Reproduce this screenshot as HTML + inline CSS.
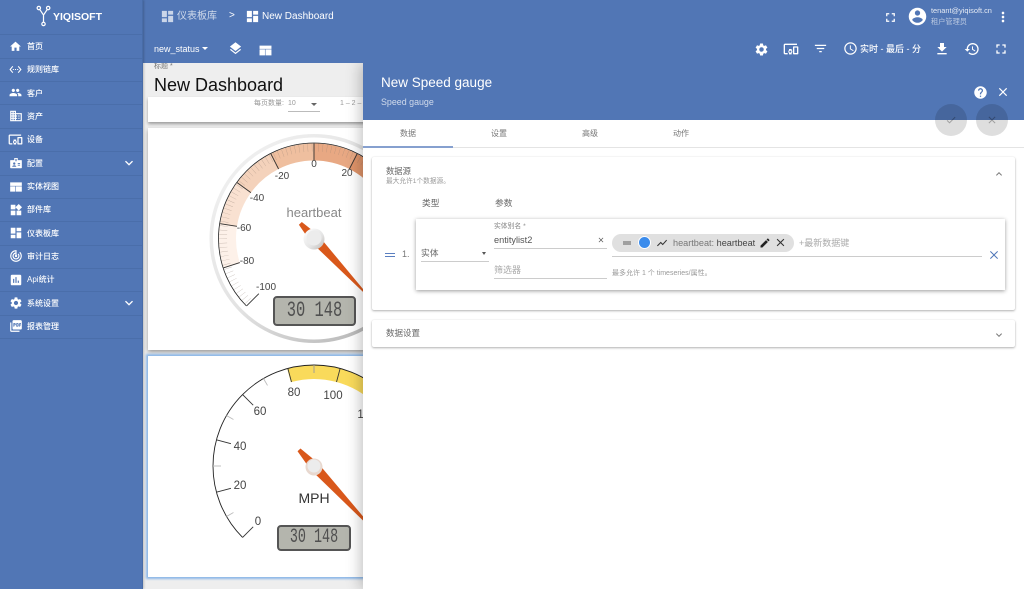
<!DOCTYPE html>
<html><head><meta charset="utf-8"><style>
html,body{margin:0;padding:0;width:1024px;height:589px;overflow:hidden;background:#eee;font-family:"Liberation Sans","Noto Sans CJK SC",sans-serif}
.t{position:absolute;white-space:nowrap;line-height:12px;height:12px}
.i{position:absolute;display:block}
.b{position:absolute}
.m{color:#fff;font-size:8px;left:27px;font-weight:500}
.sep{position:absolute;left:0;width:142px;height:1px;background:#4a6eaa}
.w{fill:#fff}
</style></head><body>
<!-- main content -->
<div class="b" style="left:143px;top:63px;width:220px;height:526px;background:#eee"></div>
<div class="t" style="left:154px;top:61px;font-size:7px;color:#777">标题 *</div>
<div class="t" style="left:154px;top:79px;font-size:18px;color:#111">New Dashboard</div>
<div class="b" style="left:148px;top:97px;width:230px;height:25px;background:#fff;box-shadow:0 2px 3px rgba(0,0,0,.35)"></div>
<div class="t" style="left:254px;top:98px;font-size:7px;color:#999">每页数量:</div>
<div class="t" style="left:288px;top:98px;font-size:7px;color:#999">10</div>
<div class="b" style="left:311px;top:103px;border:3px solid transparent;border-top:3px solid #666;border-bottom:0"></div>
<div class="b" style="left:288px;top:111px;width:32px;height:1px;background:#bbb"></div>
<div class="t" style="left:340px;top:98px;font-size:7px;color:#999">1 – 2 –</div>
<div class="b" style="left:148px;top:128px;width:230px;height:222px;background:#fff;box-shadow:0 2px 4px rgba(0,0,0,.35)"></div>
<div class="b" style="left:148px;top:356px;width:230px;height:221px;background:#fff;box-shadow:0 0 2px 2px #8db8e8"></div>

<svg class="i" style="left:0;top:0" width="1024" height="589" viewBox="0 0 1024 589">
<defs>
<linearGradient id="ring" x1="0" y1="0" x2="1" y2="1"><stop offset="0" stop-color="#f4f4f4"/><stop offset=".5" stop-color="#e2e2e2"/><stop offset="1" stop-color="#a8a8a8"/></linearGradient>
<linearGradient id="hub" x1="0" y1="0" x2="1" y2="1"><stop offset="0" stop-color="#fff"/><stop offset=".6" stop-color="#e4e4e4"/><stop offset="1" stop-color="#bdb8b4"/></linearGradient>
<clipPath id="w"><polygon points="0,0 -200,200 -200,-200 200,-200 200,200"/></clipPath>
</defs>
<!-- gauge 1 -->
<g transform="translate(314 238.500)">
<circle r="104.500" fill="url(#ring)"/>
<circle r="101" fill="#fff"/>
<g clip-path="url(#w)" fill="none">
<circle r="86.500" stroke="#fdf1e9" stroke-width="17" pathLength="360" stroke-dasharray="27 333" transform="rotate(-198)"/>
<circle r="86.500" stroke="#f9e1d1" stroke-width="17" pathLength="360" stroke-dasharray="27 333" transform="rotate(-171)"/>
<circle r="86.500" stroke="#f4d2bb" stroke-width="17" pathLength="360" stroke-dasharray="27 333" transform="rotate(-144)"/>
<circle r="86.500" stroke="#efbf9f" stroke-width="17" pathLength="360" stroke-dasharray="27 333" transform="rotate(-117)"/>
<circle r="86.500" stroke="#e8a883" stroke-width="17" pathLength="360" stroke-dasharray="27 333" transform="rotate(-90)"/>
<circle r="86.500" stroke="#e0946a" stroke-width="17" pathLength="360" stroke-dasharray="27 333" transform="rotate(-63)"/>
<circle r="91" stroke="#8a7a70" stroke-width="8" pathLength="360" stroke-dasharray=".2 2.500" transform="rotate(-90)" opacity=".55"/>
<circle r="95.500" stroke="#222" stroke-width=".8" pathLength="360" stroke-dasharray="270 90" transform="rotate(-225)"/>
</g>
<g stroke="#333" stroke-width=".9">
<line y1="-95" y2="-78" transform="rotate(-135)"/><line y1="-95" y2="-78" transform="rotate(-108)"/><line y1="-95" y2="-78" transform="rotate(-81)"/><line y1="-95" y2="-78" transform="rotate(-54)"/><line y1="-95" y2="-78" transform="rotate(-27)"/><line y1="-95" y2="-78"/><line y1="-95" y2="-78" transform="rotate(27)"/>
</g>
</g>
<g font-family="Liberation Sans" font-size="10" fill="#444" text-anchor="middle">
<text x="314" y="167">0</text><text x="347" y="176">20</text><text x="282" y="179">-20</text><text x="257" y="201">-40</text><text x="244" y="231">-60</text><text x="247" y="264">-80</text><text x="266" y="290">-100</text>
<text x="314" y="217" font-size="13" fill="#888">heartbeat</text>
</g>
<polygon transform="translate(314 238) rotate(47)" points="-20,-2 0,-5 80,-.5 80,.5 0,5 -20,2" fill="#d9581b"/>
<circle cx="314" cy="239" r="10.500" fill="url(#hub)"/><circle cx="314" cy="238" r="7.500" fill="#ececec"/>
<!-- gauge 2 -->
<g transform="translate(314 466)">
<circle r="94" fill="none" stroke="#f9da5b" stroke-width="14" pathLength="360" stroke-dasharray="60 300" transform="rotate(-105)"/>
<circle r="101" fill="none" stroke="#222" stroke-width=".9" clip-path="url(#w)"/>
<g stroke="#333" stroke-width=".9">
<line y1="-101" y2="-86" transform="rotate(-135)"/><line y1="-101" y2="-86" transform="rotate(-105)"/><line y1="-101" y2="-86" transform="rotate(-75)"/><line y1="-101" y2="-86" transform="rotate(-45)"/><line y1="-101" y2="-87" transform="rotate(-15)"/><line y1="-101" y2="-87" transform="rotate(15)"/>
</g>
<g stroke="#bbb" stroke-width=".9">
<line y1="-101" y2="-93" transform="rotate(-120)"/><line y1="-101" y2="-93" transform="rotate(-90)"/><line y1="-101" y2="-93" transform="rotate(-60)"/><line y1="-101" y2="-93" transform="rotate(-30)"/><line y1="-101" y2="-93" stroke="#999"/>
</g>
</g>
<g font-family="Liberation Sans" font-size="11.500" fill="#444" text-anchor="middle">
<text x="258" y="525">0</text><text x="240" y="489">20</text><text x="240" y="450">40</text><text x="260" y="415">60</text><text x="294" y="396">80</text><text x="333" y="399">100</text><text x="367" y="418">120</text>
<text x="314" y="503" font-size="14" fill="#333">MPH</text>
</g>
<polygon transform="translate(314 466) rotate(47)" points="-22,-2 0,-5 90,-.5 90,.5 0,5 -22,2" fill="#d9581b"/>
<circle cx="314" cy="467" r="8.500" fill="#e8d8cf"/><circle cx="314" cy="466" r="6.500" fill="#ececec"/>
</svg>
<!-- LCDs -->
<div class="b" style="left:273px;top:296px;width:79px;height:26px;border:2px solid #555;border-radius:4px;background:#b4b5ad"></div>
<div class="t" style="left:273px;top:296px;width:83px;height:30px;line-height:30px;text-align:center;font-family:'Liberation Mono',monospace;font-size:22px;color:#505050;transform:scaleX(.7)">30 148</div>
<div class="b" style="left:277px;top:525px;width:70px;height:22px;border:2px solid #555;border-radius:4px;background:#b4b5ad"></div>
<div class="t" style="left:277px;top:525px;width:74px;height:26px;line-height:26px;text-align:center;font-family:'Liberation Mono',monospace;font-size:20px;color:#505050;transform:scaleX(.67)">30 148</div>

<!-- top bar + sidebar -->
<div class="b" style="left:0;top:0;width:1024px;height:63px;background:#5176b5"></div>
<div class="b" style="left:0;top:0;width:142px;height:589px;background:#5176b5;border-right:1px solid #486ca8;box-shadow:1px 0 2px rgba(0,0,0,.2)"></div>
<div class="sep" style="top:34px"></div><div class="sep" style="top:58px"></div><div class="sep" style="top:81px"></div><div class="sep" style="top:104px"></div><div class="sep" style="top:128px"></div><div class="sep" style="top:151px"></div><div class="sep" style="top:175px"></div><div class="sep" style="top:198px"></div><div class="sep" style="top:221px"></div><div class="sep" style="top:245px"></div><div class="sep" style="top:268px"></div><div class="sep" style="top:291px"></div><div class="sep" style="top:315px"></div><div class="sep" style="top:338px"></div>

<svg class="i" style="left:36px;top:4px" width="15" height="24" viewBox="0 0 16 24" fill="none" stroke="#fff" stroke-width="1.300"><circle cx="3" cy="3.500" r="1.800"/><circle cx="13" cy="3.500" r="1.800"/><circle cx="8" cy="20.500" r="1.800"/><path d="M4 5L8 11L12 5M8 11V18.500"/></svg>
<div class="t" style="left:53px;top:11px;font-size:10.500px;font-weight:bold;color:#fff">YIQISOFT</div>

<svg class="i" style="left:9px;top:40px" width="13" height="13" viewBox="0 0 24 24"><path class="w" d="M10 20v-6h4v6h5v-8h3L12 3 2 12h3v8z"/></svg>
<svg class="i" style="left:9px;top:63px" width="13" height="13" viewBox="0 0 24 24"><path class="w" d="M7.770 6.760L6.230 5.480.82 12l5.410 6.520 1.540-1.280L3.420 12l4.350-5.240zM7 13h2v-2H7v2zm10-2h-2v2h2v-2zm-6 2h2v-2h-2v2zm6.770-7.520l-1.540 1.280L20.580 12l-4.350 5.240 1.540 1.280L23.180 12l-5.410-6.520z"/></svg>
<svg class="i" style="left:9px;top:86px" width="13" height="13" viewBox="0 0 24 24"><path class="w" d="M16 11c1.660 0 2.990-1.340 2.990-3S17.660 5 16 5c-1.660 0-3 1.340-3 3s1.340 3 3 3zm-8 0c1.660 0 2.990-1.340 2.990-3S9.660 5 8 5C6.340 5 5 6.340 5 8s1.340 3 3 3zm0 2c-2.330 0-7 1.170-7 3.500V19h14v-2.500c0-2.330-4.670-3.500-7-3.500zm8 0c-.29 0-.62.02-.97.05 1.160.84 1.970 1.970 1.970 3.450V19h6v-2.500c0-2.330-4.670-3.500-7-3.500z"/></svg>
<svg class="i" style="left:9px;top:109px" width="14" height="14" viewBox="0 0 24 24"><path class="w" d="M12 7V3H2v18h20V7H10zM6 19H4v-2h2v2zm0-4H4v-2h2v2zm0-4H4V9h2v2zm0-4H4V5h2v2zm4 12H8v-2h2v2zm0-4H8v-2h2v2zm0-4H8V9h2v2zm0-4H8V5h2v2zm10 12h-8v-2h2v-2h-2v-2h2v-2h-2V9h8v10zm-2-8h-2v2h2v-2zm0 4h-2v2h2v-2z"/></svg>
<svg class="i" style="left:8px;top:132px" width="15" height="15" viewBox="0 0 24 24"><path class="w" d="M3 6h18V4H3c-1.100 0-2 .9-2 2v12c0 1.100.9 2 2 2h4v-2H3V6zm10 6H9v1.780c-.61.55-1 1.330-1 2.220s.39 1.670 1 2.220V20h4v-1.780c.61-.55 1-1.340 1-2.220s-.39-1.670-1-2.220V12zm-2 5.500c-.83 0-1.500-.67-1.500-1.500s.67-1.500 1.500-1.500 1.500.67 1.500 1.500-.67 1.500-1.500 1.500zM22 8h-6c-.5 0-1 .5-1 1v10c0 .5.5 1 1 1h6c.5 0 1-.5 1-1V9c0-.5-.5-1-1-1zm-1 10h-4v-8h4v8z"/></svg>
<svg class="i" style="left:9px;top:156px" width="14" height="14" viewBox="0 0 24 24"><path class="w" fill-rule="evenodd" d="M3 7h6V3.500h6V7h6c.6 0 1 .4 1 1v12c0 .6-.4 1-1 1H3c-.6 0-1-.4-1-1V8c0-.6.4-1 1-1zm8-2v4h2V5zM9 11a2 2 0 100 4 2 2 0 000-4zm-3.500 7.500h7c0-1.700-2-2.700-3.500-2.700s-3.500 1-3.500 2.700zM15 12h4v1.500h-4zm0 3h4v1.500h-4z"/></svg>
<svg class="i" style="left:9px;top:180px" width="14" height="14" viewBox="0 0 24 24"><path class="w" d="M2 4h20v6H2zM2 11h9v9H2zM12 11h10v9H12z"/></svg>
<svg class="i" style="left:9px;top:203px" width="14" height="14" viewBox="0 0 24 24"><path class="w" d="M13 13v8h8v-8h-8zM3 21h8v-8H3v8zM3 3v8h8V3H3zm13.660-1.310L11 7.340 16.660 13l5.660-5.660-5.660-5.650z"/></svg>
<svg class="i" style="left:9px;top:226px" width="14" height="14" viewBox="0 0 24 24"><path class="w" d="M3 13h8V3H3v10zm0 8h8v-6H3v6zm10 0h8V11h-8v10zm0-18v6h8V3h-8z"/></svg>
<svg class="i" style="left:9px;top:249px" width="14" height="14" viewBox="0 0 24 24"><path class="w" d="M19.070 4.930l-1.410 1.410C19.100 7.790 20 9.790 20 12c0 4.420-3.580 8-8 8s-8-3.580-8-8c0-4.080 3.050-7.440 7-7.930v2.020C8.160 6.570 6 9.030 6 12c0 3.310 2.690 6 6 6s6-2.690 6-6c0-1.660-.67-3.160-1.760-4.240l-1.410 1.410C15.550 9.900 16 10.900 16 12c0 2.210-1.790 4-4 4s-4-1.790-4-4c0-1.860 1.280-3.410 3-3.860v2.140c-.6.35-1 .98-1 1.720 0 1.100.9 2 2 2s2-.9 2-2c0-.74-.4-1.380-1-1.720V2h-1C6.480 2 2 6.480 2 12s4.480 10 10 10 10-4.480 10-10c0-2.760-1.120-5.260-2.930-7.070z"/></svg>
<svg class="i" style="left:9px;top:273px" width="14" height="14" viewBox="0 0 24 24"><path class="w" d="M19 3H5c-1.100 0-2 .9-2 2v14c0 1.100.9 2 2 2h14c1.100 0 2-.9 2-2V5c0-1.100-.9-2-2-2zM9 17H7v-7h2v7zm4 0h-2V7h2v10zm4 0h-2v-4h2v4z"/></svg>
<svg class="i" style="left:9px;top:296px" width="14" height="14" viewBox="0 0 24 24"><path class="w" d="M19.140 12.940c.04-.3.06-.61.06-.94 0-.32-.02-.64-.07-.94l2.030-1.580c.18-.14.23-.41.12-.61l-1.920-3.320c-.12-.22-.37-.29-.59-.22l-2.390.96c-.5-.38-1.030-.7-1.620-.94l-.36-2.540c-.04-.24-.24-.41-.48-.41h-3.840c-.24 0-.43.17-.47.41l-.36 2.540c-.59.24-1.130.57-1.620.94l-2.390-.96c-.22-.08-.47 0-.59.22L2.740 8.870c-.12.21-.08.47.12.61l2.030 1.580c-.05.3-.09.63-.09.94s.02.64.07.94l-2.030 1.580c-.18.14-.23.41-.12.61l1.920 3.320c.12.22.37.29.59.22l2.390-.96c.5.38 1.030.7 1.620.94l.36 2.540c.05.24.24.41.48.41h3.840c.24 0 .44-.17.47-.41l.36-2.540c.59-.24 1.130-.56 1.620-.94l2.390.96c.22.08.47 0 .59-.22l1.920-3.320c.12-.22.07-.47-.12-.61l-2.010-1.580zM12 15.600c-1.980 0-3.600-1.620-3.600-3.600s1.620-3.600 3.600-3.600 3.600 1.620 3.600 3.600-1.620 3.600-3.600 3.600z"/></svg>
<svg class="i" style="left:9px;top:319px" width="14" height="14" viewBox="0 0 24 24"><path class="w" d="M20 2H8c-1.100 0-2 .9-2 2v12c0 1.100.9 2 2 2h12c1.100 0 2-.9 2-2V4c0-1.100-.9-2-2-2zm-8.500 7.500c0 .83-.67 1.500-1.500 1.500H9v2H7.500V7H10c.83 0 1.500.67 1.500 1.500v1zm5 2c0 .83-.67 1.500-1.500 1.500h-2.500V7H15c.83 0 1.500.67 1.500 1.500v3zm4-3H19v1h1.500V11H19v2h-1.500V7h3v1.500zM9 9.500h1v-1H9v1zM4 6H2v14c0 1.100.9 2 2 2h14v-2H4V6zm10 5.500h1v-3h-1v3z"/></svg>

<div class="t m" style="top:41px">首页</div><div class="t m" style="top:64px">规则链库</div><div class="t m" style="top:88px">客户</div><div class="t m" style="top:111px">资产</div><div class="t m" style="top:134px">设备</div><div class="t m" style="top:158px">配置</div><div class="t m" style="top:181px">实体视图</div><div class="t m" style="top:204px">部件库</div><div class="t m" style="top:228px">仪表板库</div><div class="t m" style="top:251px">审计日志</div><div class="t m" style="top:274px">Api统计</div><div class="t m" style="top:298px">系统设置</div><div class="t m" style="top:321px">报表管理</div>
<svg class="i" style="left:121px;top:155px" width="16" height="16" viewBox="0 0 24 24"><path class="w" d="M16.590 8.590L12 13.170 7.410 8.590 6 10l6 6 6-6z"/></svg>
<svg class="i" style="left:121px;top:295px" width="16" height="16" viewBox="0 0 24 24"><path class="w" d="M16.590 8.590L12 13.170 7.410 8.590 6 10l6 6 6-6z"/></svg>

<!-- breadcrumb -->
<svg class="i" style="left:160px;top:9px" width="15" height="15" viewBox="0 0 24 24"><path fill="#fff" opacity=".7" d="M3 13h8V3H3v10zm0 8h8v-6H3v6zm10 0h8V11h-8v10zm0-18v6h8V3h-8z"/></svg>
<div class="t" style="left:177px;top:11px;font-size:10px;color:rgba(255,255,255,.72)">仪表板库</div>
<div class="t" style="left:229px;top:10px;font-size:10px;color:#fff">&gt;</div>
<svg class="i" style="left:245px;top:9px" width="15" height="15" viewBox="0 0 24 24"><path class="w" d="M3 13h8V3H3v10zm0 8h8v-6H3v6zm10 0h8V11h-8v10zm0-18v6h8V3h-8z"/></svg>
<div class="t" style="left:262px;top:11px;font-size:10px;color:#fff">New Dashboard</div>
<div class="t" style="left:154px;top:43px;font-size:9px;color:#fff">new_status</div>
<div class="b" style="left:202px;top:47px;border:3px solid transparent;border-top:3px solid #fff;border-bottom:0"></div>
<svg class="i" style="left:228px;top:41px" width="15" height="15" viewBox="0 0 24 24"><path class="w" d="M11.990 18.540l-7.370-5.730L3 14.070l9 7 9-7-1.630-1.270-7.380 5.740zM12 16l7.360-5.730L21 9l-9-7-9 7 1.630 1.270L12 16z"/></svg>
<svg class="i" style="left:259px;top:44px" width="13" height="13" viewBox="0 0 24 24"><path class="w" d="M1 3h22v6H1zM1 10h10v11H1zM12 10h11v11H12z"/></svg>

<!-- top right -->
<svg class="i" style="left:883px;top:10px" width="15" height="15" viewBox="0 0 24 24"><path class="w" d="M7 14H5v5h5v-2H7v-3zm-2-4h2V7h3V5H5v5zm12 7h-3v2h5v-5h-2v3zM14 5v2h3v3h2V5h-5z"/></svg>
<svg class="i" style="left:907px;top:6px" width="21" height="21" viewBox="0 0 24 24"><path class="w" d="M12 2C6.480 2 2 6.480 2 12s4.480 10 10 10 10-4.480 10-10S17.520 2 12 2zm0 3c1.660 0 3 1.340 3 3s-1.340 3-3 3-3-1.340-3-3 1.340-3 3-3zm0 14.200c-2.500 0-4.710-1.280-6-3.220.03-1.990 4-3.080 6-3.080 1.990 0 5.970 1.090 6 3.080-1.290 1.940-3.500 3.220-6 3.220z"/></svg>
<div class="t" style="left:931px;top:5px;font-size:7.400px;color:rgba(255,255,255,.85)">tenant@yiqisoft.cn</div>
<div class="t" style="left:931px;top:16px;font-size:7.200px;color:rgba(255,255,255,.6)">租户管理员</div>
<svg class="i" style="left:995px;top:9px" width="16" height="16" viewBox="0 0 24 24"><path class="w" d="M12 8c1.100 0 2-.9 2-2s-.9-2-2-2-2 .9-2 2 .9 2 2 2zm0 2c-1.100 0-2 .9-2 2s.9 2 2 2 2-.9 2-2-.9-2-2-2zm0 6c-1.100 0-2 .9-2 2s.9 2 2 2 2-.9 2-2-.9-2-2-2z"/></svg>

<svg class="i" style="left:754px;top:42px" width="15" height="15" viewBox="0 0 24 24"><path class="w" d="M19.140 12.940c.04-.3.06-.61.06-.94 0-.32-.02-.64-.07-.94l2.030-1.580c.18-.14.23-.41.12-.61l-1.920-3.320c-.12-.22-.37-.29-.59-.22l-2.390.96c-.5-.38-1.030-.7-1.620-.94l-.36-2.540c-.04-.24-.24-.41-.48-.41h-3.840c-.24 0-.43.17-.47.41l-.36 2.540c-.59.24-1.130.57-1.620.94l-2.390-.96c-.22-.08-.47 0-.59.22L2.740 8.870c-.12.21-.08.47.12.61l2.030 1.580c-.05.3-.09.63-.09.94s.02.64.07.94l-2.030 1.580c-.18.14-.23.41-.12.61l1.920 3.320c.12.22.37.29.59.22l2.390-.96c.5.38 1.030.7 1.620.94l.36 2.540c.05.24.24.41.48.41h3.840c.24 0 .44-.17.47-.41l.36-2.540c.59-.24 1.130-.56 1.620-.94l2.390.96c.22.08.47 0 .59-.22l1.920-3.320c.12-.22.07-.47-.12-.61l-2.010-1.580zM12 15.600c-1.980 0-3.600-1.620-3.600-3.600s1.620-3.600 3.600-3.600 3.600 1.620 3.600 3.600-1.620 3.600-3.600 3.600z"/></svg>
<svg class="i" style="left:783px;top:41px" width="16" height="16" viewBox="0 0 24 24"><path class="w" d="M3 6h18V4H3c-1.100 0-2 .9-2 2v12c0 1.100.9 2 2 2h4v-2H3V6zm10 6H9v1.780c-.61.55-1 1.330-1 2.220s.39 1.670 1 2.220V20h4v-1.780c.61-.55 1-1.340 1-2.220s-.39-1.670-1-2.220V12zm-2 5.500c-.83 0-1.500-.67-1.500-1.500s.67-1.500 1.500-1.500 1.500.67 1.500 1.500-.67 1.500-1.500 1.500zM22 8h-6c-.5 0-1 .5-1 1v10c0 .5.5 1 1 1h6c.5 0 1-.5 1-1V9c0-.5-.5-1-1-1zm-1 10h-4v-8h4v8z"/></svg>
<svg class="i" style="left:813px;top:41px" width="15" height="15" viewBox="0 0 24 24"><path class="w" d="M10 18h4v-2h-4v2zM3 6v2h18V6H3zm3 7h12v-2H6v2z"/></svg>
<svg class="i" style="left:843px;top:41px" width="15" height="15" viewBox="0 0 24 24"><path class="w" d="M11.990 2C6.470 2 2 6.480 2 12s4.470 10 9.990 10C17.520 22 22 17.520 22 12S17.520 2 11.990 2zM12 20c-4.420 0-8-3.580-8-8s3.580-8 8-8 8 3.580 8 8-3.580 8-8 8zm.5-13H11v6l5.250 3.150.75-1.230-4.500-2.670z"/></svg>
<div class="t" style="left:860px;top:43px;font-size:9px;color:#fff;font-weight:500">实时 - 最后 - 分</div>
<svg class="i" style="left:934px;top:41px" width="16" height="16" viewBox="0 0 24 24"><path class="w" d="M19 9h-4V3H9v6H5l7 7 7-7zM5 18v2h14v-2H5z"/></svg>
<svg class="i" style="left:964px;top:41px" width="16" height="16" viewBox="0 0 24 24"><path class="w" d="M13 3c-4.970 0-9 4.030-9 9H1l3.890 3.890.07.14L9 12H6c0-3.870 3.130-7 7-7s7 3.130 7 7-3.130 7-7 7c-1.930 0-3.680-.79-4.940-2.060l-1.420 1.420C8.270 19.990 10.510 21 13 21c4.970 0 9-4.030 9-9s-4.030-9-9-9zm-1 5v5l4.280 2.540.72-1.210-3.500-2.080V8H12z"/></svg>
<svg class="i" style="left:993px;top:41px" width="16" height="16" viewBox="0 0 24 24"><path class="w" d="M7 14H5v5h5v-2H7v-3zm-2-4h2V7h3V5H5v5zm12 7h-3v2h5v-5h-2v3zM14 5v2h3v3h2V5h-5z"/></svg>

<!-- panel -->
<div class="b" style="left:363px;top:63px;width:661px;height:526px;background:#fff;box-shadow:-2px 0 14px rgba(0,0,0,.26);clip-path:inset(0 0 0 -30px)"></div>
<div class="b" style="left:363px;top:63px;width:661px;height:57px;background:#5176b5"></div>
<div class="t" style="left:381px;top:77px;font-size:13.500px;color:#fff">New Speed gauge</div>
<div class="t" style="left:381px;top:96px;font-size:8.900px;color:rgba(255,255,255,.72)">Speed gauge</div>
<svg class="i" style="left:973px;top:85px" width="15" height="15" viewBox="0 0 24 24"><path class="w" d="M12 2C6.480 2 2 6.480 2 12s4.480 10 10 10 10-4.480 10-10S17.520 2 12 2zm1 17h-2v-2h2v2zm2.070-7.750l-.9.92C13.450 12.900 13 13.500 13 15h-2v-.5c0-1.100.45-2.100 1.170-2.830l1.240-1.260c.37-.36.59-.86.59-1.410 0-1.100-.9-2-2-2s-2 .9-2 2H8c0-2.210 1.790-4 4-4s4 1.790 4 4c0 .88-.36 1.680-.93 2.250z"/></svg>
<svg class="i" style="left:996px;top:85px" width="14" height="14" viewBox="0 0 24 24"><path class="w" d="M19 6.410L17.590 5 12 10.590 6.410 5 5 6.410 10.590 12 5 17.590 6.410 19 12 13.410 17.590 19 19 17.590 13.410 12z"/></svg>
<div class="b" style="left:935px;top:104px;width:32px;height:32px;border-radius:50%;background:rgba(0,0,0,.13)"></div>
<div class="b" style="left:976px;top:104px;width:32px;height:32px;border-radius:50%;background:rgba(0,0,0,.13)"></div>
<svg class="i" style="left:945px;top:114px" width="12" height="12" viewBox="0 0 24 24"><path fill="rgba(0,0,0,.28)" d="M9 16.170L4.830 12l-1.420 1.410L9 19 21 7l-1.410-1.410z"/></svg>
<svg class="i" style="left:986px;top:114px" width="12" height="12" viewBox="0 0 24 24"><path fill="rgba(0,0,0,.28)" d="M19 6.410L17.590 5 12 10.590 6.410 5 5 6.410 10.590 12 5 17.590 6.410 19 12 13.410 17.590 19 19 17.590 13.410 12z"/></svg>

<div class="t" style="left:400px;top:128px;font-size:8px;color:#777">数据</div>
<div class="t" style="left:491px;top:128px;font-size:8px;color:#777">设置</div>
<div class="t" style="left:582px;top:128px;font-size:8px;color:#777">高级</div>
<div class="t" style="left:673px;top:128px;font-size:8px;color:#777">动作</div>
<div class="b" style="left:363px;top:147px;width:661px;height:1px;background:#e4e4e4"></div>
<div class="b" style="left:363px;top:146px;width:90px;height:2px;background:#86a0cf"></div>

<div class="b" style="left:372px;top:157px;width:643px;height:153px;background:#fff;border-radius:2px;box-shadow:0 1px 2px rgba(0,0,0,.3),0 0 1px rgba(0,0,0,.1)"></div>
<div class="t" style="left:386px;top:165px;font-size:8.300px;color:#666">数据源</div>
<div class="t" style="left:386px;top:176px;font-size:6.700px;color:#999">最大允许1个数据源。</div>
<svg class="i" style="left:993px;top:168px" width="12" height="12" viewBox="0 0 24 24"><path fill="#777" d="M12 8l-6 6 1.410 1.410L12 10.830l4.590 4.580L18 14z"/></svg>
<div class="t" style="left:422px;top:197px;font-size:8.700px;color:#666">类型</div>
<div class="t" style="left:495px;top:197px;font-size:8.700px;color:#666">参数</div>
<div class="b" style="left:385px;top:252.500px;width:10px;height:1.500px;background:#5a7fc0"></div>
<div class="b" style="left:385px;top:255.500px;width:10px;height:1.500px;background:#5a7fc0"></div>
<div class="t" style="left:402px;top:248px;font-size:9px;color:#777">1.</div>

<div class="b" style="left:416px;top:219px;width:589px;height:71px;background:#fff;box-shadow:0 1px 4px rgba(0,0,0,.4)"></div>
<div class="t" style="left:421px;top:247px;font-size:8.800px;color:#666">实体</div>
<div class="b" style="left:482px;top:252px;border:2.500px solid transparent;border-top:3px solid #555;border-bottom:0"></div>
<div class="b" style="left:421px;top:261px;width:68px;height:1px;background:#ccc"></div>
<div class="t" style="left:494px;top:221px;font-size:6.800px;color:#888">实体别名 *</div>
<div class="t" style="left:494px;top:234px;font-size:9.200px;color:#555">entitylist2</div>
<svg class="i" style="left:597px;top:236px" width="8" height="8" viewBox="0 0 24 24"><path fill="#555" d="M19 6.410L17.590 5 12 10.590 6.410 5 5 6.410 10.590 12 5 17.590 6.410 19 12 13.410 17.590 19 19 17.590 13.410 12z"/></svg>
<div class="b" style="left:494px;top:248px;width:113px;height:1px;background:#ccc"></div>
<div class="t" style="left:494px;top:264px;font-size:9px;color:#aaa">筛选器</div>
<div class="b" style="left:494px;top:278px;width:113px;height:1px;background:#ccc"></div>

<div class="b" style="left:612px;top:234px;width:182px;height:18px;border-radius:9px;background:#e0e0e0"></div>
<div class="b" style="left:623px;top:241px;width:8px;height:4px;background:#a0a0a0"></div>
<div class="b" style="left:638px;top:236px;width:11px;height:11px;border:1px solid #fff;border-radius:50%;background:#3b8cec;box-shadow:0 0 0 .5px #ddd"></div>
<svg class="i" style="left:656px;top:237px" width="12" height="12" viewBox="0 0 24 24"><path fill="#333" d="M3.500 18.490l6-6.010 4 4L22 6.920l-1.410-1.410-7.090 7.970-4-4L2 16.990z"/></svg>
<div class="t" style="left:673px;top:237px;font-size:9.150px;color:#777">heartbeat: <span style="color:#444">heartbeat</span></div>
<svg class="i" style="left:759px;top:237px" width="12" height="12" viewBox="0 0 24 24"><path fill="#222" d="M3 17.250V21h3.750L17.810 9.940l-3.750-3.750L3 17.250zM20.710 7.040c.39-.39.39-1.020 0-1.410l-2.340-2.340c-.39-.39-1.020-.39-1.410 0l-1.830 1.830 3.750 3.750 1.830-1.830z"/></svg>
<svg class="i" style="left:774px;top:236px" width="13" height="13" viewBox="0 0 24 24"><path fill="#333" d="M19 6.410L17.590 5 12 10.590 6.410 5 5 6.410 10.590 12 5 17.590 6.410 19 12 13.410 17.590 19 19 17.590 13.410 12z"/></svg>
<div class="t" style="left:799px;top:237px;font-size:9px;color:#aaa">+最新数据键</div>
<div class="b" style="left:612px;top:256px;width:370px;height:1px;background:#ccc"></div>
<svg class="i" style="left:988px;top:249px" width="12" height="12" viewBox="0 0 24 24"><path fill="#4f76b8" d="M20 5.400L18.600 4 12 10.600 5.400 4 4 5.400 10.600 12 4 18.600 5.400 20 12 13.400 18.600 20 20 18.600 13.400 12z"/></svg>
<div class="t" style="left:612px;top:268px;font-size:7px;color:#999">最多允许 1 个 timeseries/属性。</div>

<div class="b" style="left:372px;top:320px;width:643px;height:27px;background:#fff;border-radius:2px;box-shadow:0 1px 2px rgba(0,0,0,.3),0 0 1px rgba(0,0,0,.1)"></div>
<div class="t" style="left:386px;top:327px;font-size:8.500px;color:#666">数据设置</div>
<svg class="i" style="left:993px;top:329px" width="12" height="12" viewBox="0 0 24 24"><path fill="#777" d="M16.590 8.590L12 13.170 7.410 8.590 6 10l6 6 6-6z"/></svg>
</body></html>
